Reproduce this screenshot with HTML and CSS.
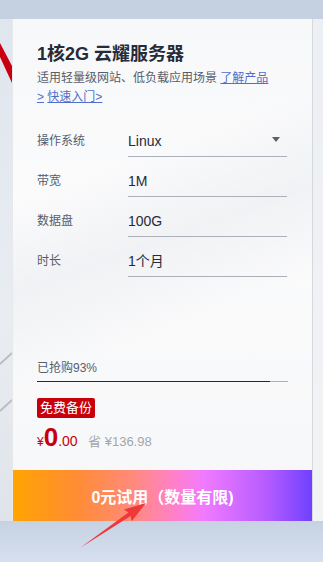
FILE: index.html
```html
<!DOCTYPE html>
<html lang="zh-CN">
<head>
    <meta charset="UTF-8">
    <meta name="viewport" content="width=device-width, initial-scale=1.0">
    <title>1核2G 云耀服务器</title>
    <link rel="stylesheet" href="styles.css">
</head>
<body>
    <div class="topbar"></div>

    <div class="stage">
        <div class="side side-left">
            <svg width="12" height="502" viewBox="0 0 12 502">
                <polygon points="0,24 0,38 12,64 12,47" fill="#c9000f"/>
                <line x1="0" y1="345" x2="12" y2="334" stroke="#9aa0a8" stroke-width="2" opacity="0.6"/>
                <line x1="0" y1="392" x2="12" y2="381" stroke="#9aa0a8" stroke-width="2" opacity="0.6"/>
            </svg>
        </div>

        <div class="card">
            <div class="card-body">
                <h1 class="title">1核2G 云耀服务器</h1>
                <p class="desc">适用轻量级网站、低负载应用场景 <a href="#">了解产品 &gt;</a> <a href="#">快速入门&gt;</a></p>

                <div class="form">
                    <div class="row">
                        <span class="label">操作系统</span>
                        <span class="value">Linux <i class="caret"></i></span>
                    </div>
                    <div class="row">
                        <span class="label">带宽</span>
                        <span class="value">1M</span>
                    </div>
                    <div class="row">
                        <span class="label">数据盘</span>
                        <span class="value">100G</span>
                    </div>
                    <div class="row">
                        <span class="label">时长</span>
                        <span class="value">1个月</span>
                    </div>
                </div>

                <div class="progress">
                    <p class="progress-text">已抢购93%</p>
                    <div class="progress-bar"><div class="progress-fill" style="width: 93%"></div></div>
                </div>

                <span class="badge">免费备份</span>

                <div class="price">
                    <span class="yen">¥</span><span class="num">0</span><span class="dec">.00</span>
                    <span class="save">省 ¥136.98</span>
                </div>
            </div>

            <a class="buy" href="#">0元试用（数量有限)</a>
        </div>

        <div class="side side-right"></div>
    </div>

    <div class="bottom"></div>

    <svg class="arrow" width="323" height="562" viewBox="0 0 323 562">
        <polygon points="80,548 130.6,515.9 131.7,521.2 146,503 123.9,509.6 128.4,512.6" fill="#f0383a"/>
    </svg>
</body>
</html>
```

FILE: styles.css
```css
* {
    margin: 0;
    padding: 0;
    box-sizing: border-box;
}

body {
    font-family: "Liberation Sans", "Noto Sans CJK SC", sans-serif;
    color: #333;
    background: #e3e8ef;
    width: 323px;
    height: 562px;
    overflow: hidden;
    position: relative;
}

.topbar {
    height: 19px;
    background: #c5d0e0;
}

.stage {
    display: flex;
    height: 502px;
}

.side {
    background: linear-gradient(180deg, #e0e6ee 0%, #e9edf2 60%, #dfe4ea 100%);
}

.side-left {
    width: 12px;
    display: flex;
}

.side-right {
    width: 10px;
    background: linear-gradient(180deg, #eceff3 0%, #f2f3f5 100%);
}

/* Card */
.card {
    width: 301px;
    display: flex;
    flex-direction: column;
    border-left: 1px solid #e6e8ec;
    border-right: 1px solid #d6d8dc;
    background:
        linear-gradient(160deg, rgba(255,255,255,0) 30%, rgba(236,238,241,0.7) 45%, rgba(255,255,255,0) 60%),
        linear-gradient(180deg, #f7f8f9 0%, #fbfbfc 40%, #f6f7f8 100%);
}

.card-body {
    padding: 23px 24px 0 24px;
}

.title {
    font-size: 18px;
    line-height: 24px;
    font-weight: bold;
    color: #252b3a;
    margin-bottom: 3px;
}

.desc {
    width: 236px;
    font-size: 12px;
    line-height: 19px;
    color: #575d6c;
}

.desc a {
    color: #526ecc;
    text-decoration: underline;
}

/* Form rows */
.form {
    margin-top: 10px;
}

.row {
    display: grid;
    grid-template-columns: 91px 159px;
    height: 40px;
}

.label {
    font-size: 12px;
    line-height: 20px;
    padding-top: 14px;
    color: #575d6c;
}

.value {
    display: flex;
    justify-content: space-between;
    align-items: center;
    font-size: 14px;
    line-height: 20px;
    padding-top: 14px;
    padding-bottom: 5px;
    height: 40px;
    padding-right: 7px;
    color: #252b3a;
    border-bottom: 1px solid #adb0b8;
}

.caret {
    width: 0;
    height: 0;
    border-left: 4px solid transparent;
    border-right: 4px solid transparent;
    border-top: 5px solid #5e6268;
    margin-top: -3px;
}

/* Progress */
.progress {
    margin-top: 82px;
    width: 251px;
}

.progress-text {
    font-size: 12px;
    line-height: 18px;
    color: #575d6c;
}

.progress-bar {
    margin-top: 4px;
    height: 1px;
    background: #adb0b8;
}

.progress-fill {
    height: 1px;
    background: #252b3a;
}

.badge {
    display: inline-block;
    margin-top: 16px;
    height: 20px;
    line-height: 20px;
    padding: 0 3px;
    font-size: 13px;
    color: #fff;
    background: #c7000b;
    border-radius: 2px;
}

.price {
    margin-top: 4px;
    line-height: 30px;
    color: #c7000b;
    white-space: nowrap;
}

.yen {
    font-size: 12px;
}

.num {
    font-size: 26px;
    font-weight: bold;
}

.dec {
    font-size: 14px;
}

.save {
    margin-left: 6px;
    font-size: 13px;
    color: #a3a6ad;
}

/* Button */
.buy {
    margin-top: auto;
    display: flex;
    align-items: center;
    justify-content: center;
    height: 51px;
    font-size: 16px;
    font-weight: bold;
    color: #fff;
    text-decoration: none;
    background: linear-gradient(90deg, #ffa400 0%, #ff8c36 22%, #ff8a7c 40%, #ff80d0 55%, #f07aff 64%, #b55cff 85%, #7040ff 100%);
}

.bottom {
    height: 41px;
    background: linear-gradient(180deg, #c6d1e2 0%, #d6e0ef 100%);
}

.arrow {
    position: absolute;
    left: 0;
    top: 0;
    pointer-events: none;
}
```
